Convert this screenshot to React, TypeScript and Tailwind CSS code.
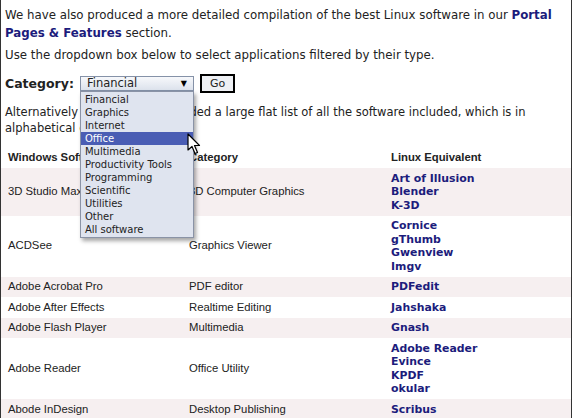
import React from 'react';

const categories = [
  'Financial',
  'Graphics',
  'Internet',
  'Office',
  'Multimedia',
  'Productivity Tools',
  'Programming',
  'Scientific',
  'Utilities',
  'Other',
  'All software',
];

const rows: { win: string; cat: string; linux: string[] }[] = [
  { win: '3D Studio Max', cat: '3D Computer Graphics', linux: ['Art of Illusion', 'Blender', 'K-3D'] },
  { win: 'ACDSee', cat: 'Graphics Viewer', linux: ['Cornice', 'gThumb', 'Gwenview', 'Imgv'] },
  { win: 'Adobe Acrobat Pro', cat: 'PDF editor', linux: ['PDFedit'] },
  { win: 'Adobe After Effects', cat: 'Realtime Editing', linux: ['Jahshaka'] },
  { win: 'Adobe Flash Player', cat: 'Multimedia', linux: ['Gnash'] },
  { win: 'Adobe Reader', cat: 'Office Utility', linux: ['Adobe Reader', 'Evince', 'KPDF', 'okular'] },
  { win: 'Abode InDesign', cat: 'Desktop Publishing', linux: ['Scribus'] },
];

function Cursor() {
  return (
    <svg width="14" height="22" viewBox="0 0 14 22" className="absolute left-[106px] top-[41px]">
      <path
        d="M1 1 L1 17 L5 13.5 L8 20.5 L10.5 19.5 L7.5 12.5 L12.5 12.5 Z"
        fill="#fff"
        stroke="#000"
        strokeWidth="1.2"
        strokeLinejoin="round"
      />
    </svg>
  );
}

export default function App() {
  return (
    <div className="w-[574px] h-[418px] overflow-hidden bg-white">
      <div className="w-[572px] h-[418px] border-x border-[#333] font-['DejaVu_Sans',sans-serif] text-[#222]">
        <div className="px-[4px] pt-[6px] text-[11.8px] leading-[18px]">
          <p>
            We have also produced a more detailed compilation of the best Linux software in our{' '}
            <a className="font-bold text-[11.8px] text-[#1c1c7c]">Portal Pages &amp; Features</a> section.
          </p>
          <p className="mt-[4px]">Use the dropdown box below to select applications filtered by their type.</p>
          <div className="mt-[10px] flex items-center h-[19px]">
            <span className="font-bold text-[12.5px] mr-[6px]">Category:</span>
            <div className="relative">
              <div className="w-[114px] h-[15px] border border-[#8592a8] bg-gradient-to-b from-[#f7f8fb] to-[#dce2ec] flex items-center pl-[6px] pr-[4px] text-[11.5px] leading-none">
                <span className="flex-1">Financial</span>
                <span className="text-[8px] text-black mr-[2px]">▼</span>
              </div>
              <div className="absolute left-0 top-[15px] z-10 w-[114px] border border-[#8a93a6] bg-[#dfe4ef] shadow-[2px_3px_4px_rgba(0,0,0,0.35)] py-[1px] text-[10px] leading-[13px]">
                {categories.map((c) => (
                  <div
                    key={c}
                    className={`px-[4px] ${c === 'Office' ? 'bg-[#4a5db4] text-white' : 'text-[#222]'}`}
                  >
                    {c}
                  </div>
                ))}
                <Cursor />
              </div>
            </div>
            <div className="ml-[6px] h-[19px] px-[8px] border-2 border-black bg-[#eef0f4] flex items-center text-[11px]">
              Go
            </div>
          </div>
          <p className="mt-[11px] text-[11.5px] leading-[16px]">
            Alternatively we have also provided a large flat list of all the software included, which is in
            alphabetical order.
          </p>
        </div>
        <table className="mt-[11px] w-[570px] table-fixed border-collapse font-['Liberation_Sans',Arial,sans-serif] text-[11.3px] leading-[13.5px] text-[#222]">
          <colgroup>
            <col className="w-[182px]" />
            <col className="w-[202px]" />
            <col className="w-[186px]" />
          </colgroup>
          <thead>
            <tr className="h-[21px] text-left">
              <th className="pl-[7px] font-bold">Windows Software</th>
              <th className="pl-[6px] font-bold">Category</th>
              <th className="pl-[6px] font-bold">Linux Equivalent</th>
            </tr>
          </thead>
          <tbody>
            {rows.map((r, i) => (
              <tr key={r.win} className={i % 2 === 0 ? 'bg-[#f6eff0]' : 'bg-white'}>
                <td className="pl-[7px] py-[3.5px] align-middle">{r.win}</td>
                <td className="pl-[6px] py-[3.5px] align-middle">{r.cat}</td>
                <td className="pl-[6px] py-[3.5px] align-middle">
                  {r.linux.map((l) => (
                    <div
                      key={l}
                      className="font-['DejaVu_Sans',sans-serif] font-bold text-[10.9px] leading-[13.5px] text-[#1c1c7c]"
                    >
                      {l}
                    </div>
                  ))}
                </td>
              </tr>
            ))}
          </tbody>
        </table>
      </div>
    </div>
  );
}
